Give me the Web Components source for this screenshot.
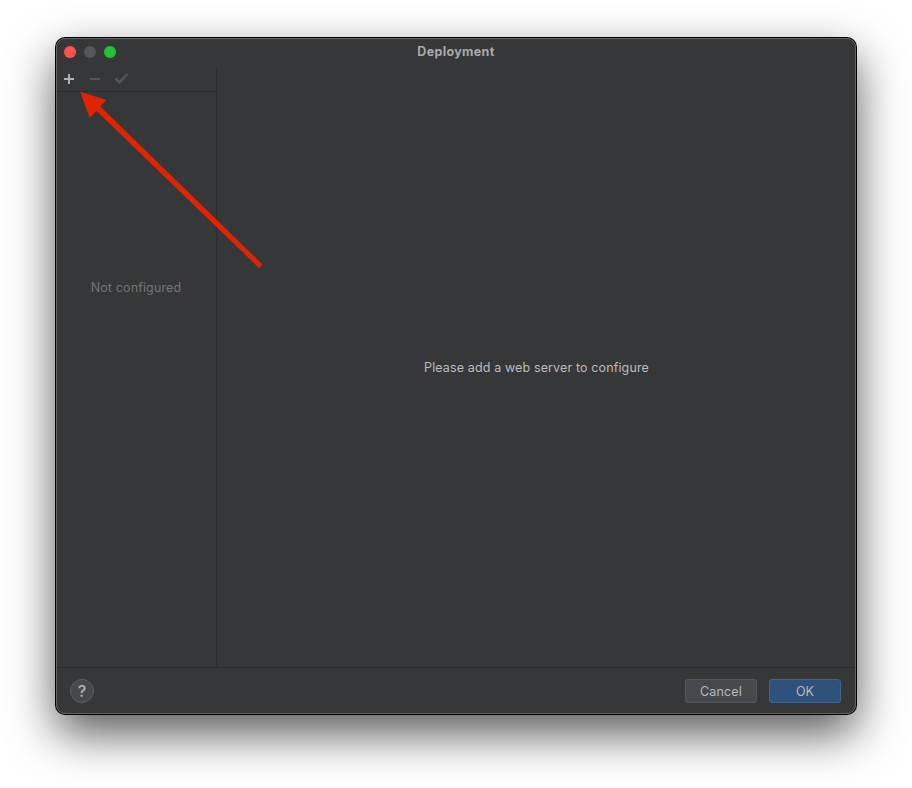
<!DOCTYPE html>
<html lang="en">
<head>
<meta charset="utf-8">
<title>Deployment</title>
<style>
html,body{margin:0;height:100%;background:#fff;overflow:hidden}
body{font:12.5px/16px Inter,"Liberation Sans",sans-serif;letter-spacing:.13px;color:#bbb}
</style>
</head>
<body>
<deploy-dialog></deploy-dialog>
<script>
const define = (name, html) => {
  const t = document.createElement('template');
  t.innerHTML = html;
  customElements.define(name, class extends HTMLElement {
    constructor() {
      super();
      this.attachShadow({ mode: 'open' }).append(t.content.cloneNode(true));
    }
  });
};

define('title-bar', `
<style>
:host{display:grid;grid-template-columns:1fr auto 1fr;align-items:center;height:28px;padding:0 8px;flex:none}
.lights{display:flex;gap:8px}
i{width:12px;height:12px;border-radius:50%;background:#ff534f}
i:nth-child(2){background:#555658}
i:nth-child(3){background:#22c138}
b{font-weight:700;color:#a9aaab;letter-spacing:.34px}
</style>
<div class="lights"><i></i><i></i><i></i></div><b><slot></slot></b><span></span>`);

define('tool-bar', `
<style>
:host{display:flex;height:25px;box-sizing:border-box;border-bottom:1px solid #2b2c2d;flex:none}
svg{display:block}
</style>
<svg width="80" height="24" viewBox="0 0 80 24" fill="none" stroke-width="2">
<path d="M8 12H18M13 7V17" stroke="#afb1b3"/>
<path d="M34 12H44" stroke="#525456"/>
<path d="M59.5 11.5L63.5 15.3L71.5 7" stroke="#525456" stroke-width="2.4"/>
</svg>`);

define('side-panel', `
<style>
:host{display:flex;flex-direction:column;width:160px;border-right:1px solid #2b2c2d;flex:none}
.empty{flex:1;padding-top:188px;text-align:center;color:#747576;letter-spacing:.14px}
</style>
<tool-bar></tool-bar><div class="empty"><slot></slot></div>`);

define('detail-panel', `
<style>
:host{display:flex;flex:1;align-items:center;justify-content:center;padding-top:2px}
</style>
<slot></slot>`);

define('push-button', `
<style>
:host{display:flex;align-items:center;justify-content:center;box-sizing:border-box;width:72px;height:24px;border:1px solid #56595b;border-radius:3px;background:#45494b;padding-top:1px}
:host([primary]){background:#2f527c;border-color:#426789}
</style>
<slot></slot>`);

define('help-button', `
<style>
:host{display:flex;align-items:center;justify-content:center;box-sizing:border-box;width:24px;height:24px;border:1px solid #5a5e60;border-radius:50%;background:#45494b;font-size:16px;font-weight:500;letter-spacing:0;color:#afb1b3}
</style>
<slot></slot>`);

define('dialog-footer', `
<style>
:host{display:flex;align-items:center;height:47px;box-sizing:border-box;border-top:1px solid #2b2c2d;padding:0 15px 0 14px;flex:none}
.actions{display:flex;gap:12px;margin-left:auto}
</style>
<help-button>?</help-button>
<div class="actions"><push-button>Cancel</push-button><push-button primary>OK</push-button></div>`);

define('pointer-arrow', `
<style>
:host{position:absolute;left:23px;top:52px;width:190px;height:185px;pointer-events:none}
svg{display:block}
</style>
<svg width="190" height="185" viewBox="79 90 190 185" fill="#e02401">
<path d="M80.2 91.8L106.6 100L100.3 106.5L262.7 264.6L259.2 268.2L96.3 110.7L89.7 117.9Z"/>
</svg>`);

define('deploy-dialog', `
<style>
:host{display:block;padding:38px 0 0 56px}
.window{position:relative;display:flex;flex-direction:column;width:800px;height:676px;border-radius:9px;background:#363738;box-shadow:0 0 0 1px #000,0 19px 47px rgba(0,0,0,.67)}
.window::after{content:"";position:absolute;inset:0;border:1px solid #626364;border-radius:9px;pointer-events:none}
.main{display:flex;flex:1;padding-top:1px}
</style>
<div class="window">
<title-bar>Deployment</title-bar>
<div class="main"><side-panel>Not configured</side-panel><detail-panel>Please add a web server to configure</detail-panel></div>
<dialog-footer></dialog-footer>
<pointer-arrow></pointer-arrow>
</div>`);
</script>
</body>
</html>
